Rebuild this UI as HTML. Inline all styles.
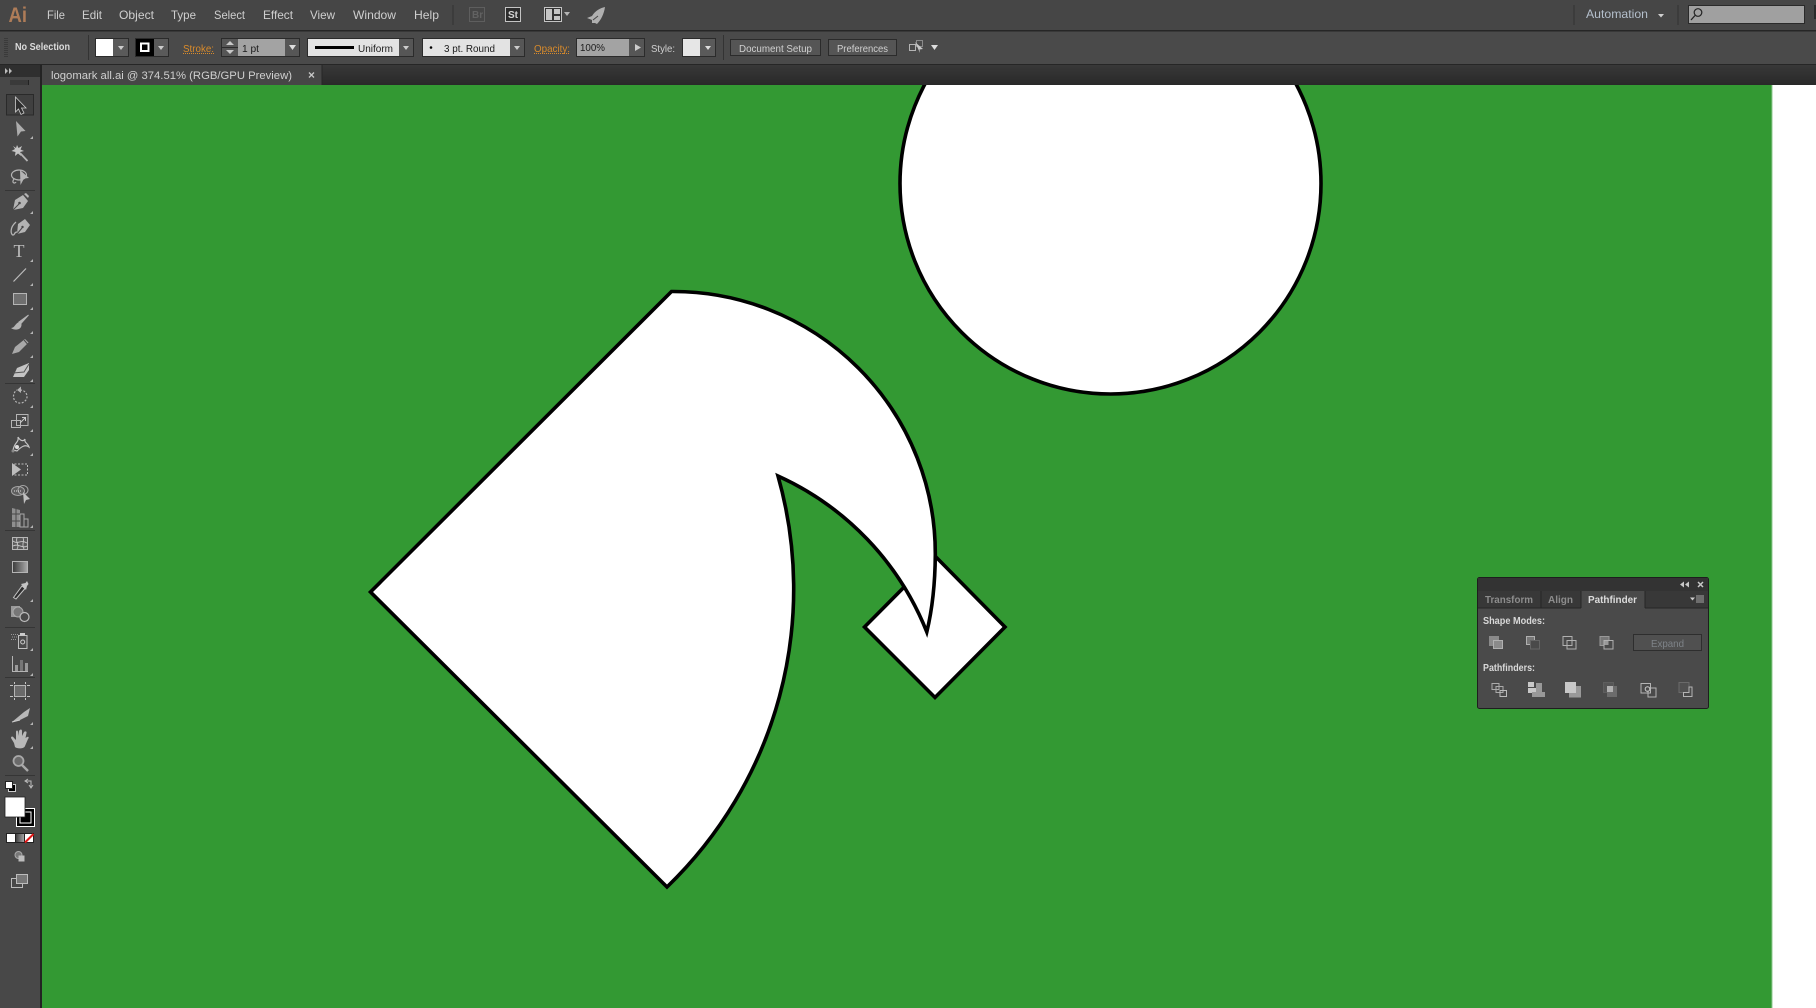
<!DOCTYPE html>
<html><head><meta charset="utf-8"><style>
html,body{margin:0;padding:0;width:1816px;height:1008px;overflow:hidden;background:#fff}
svg{display:block;font-family:"Liberation Sans",sans-serif}
.m{font-size:12px;fill:#cfcfcf}
.c{font-size:10.5px;fill:#d0d0d0}
.o{font-size:10.5px;fill:#d98b2b}
.d{font-size:10.5px;fill:#1c1c1c}
.i{fill:#b4b4b4}
</style></head><body>
<svg width="1816" height="1008" viewBox="0 0 1816 1008" xmlns="http://www.w3.org/2000/svg">
<defs>
<linearGradient id="g"><stop offset="0" stop-color="#3a3a3a"/><stop offset="1" stop-color="#aaa"/></linearGradient>
<linearGradient id="t" x1="0" y1="0" x2="0" y2="1"><stop offset="0" stop-color="#383838"/><stop offset="1" stop-color="#292929"/></linearGradient>
</defs>
<!-- canvas -->
<rect x="42" y="85" width="1729.500" height="923" fill="#339933"/>
<rect x="1771.500" y="85" width="1" height="923" fill="#8fc88f"/>
<g fill="#fff" stroke="#000" stroke-width="3.600" stroke-linejoin="miter" stroke-miterlimit="20">
<circle cx="1110.500" cy="183.500" r="210.500"/>
<path d="M864.500 627 L935 556 L1005 627 L935 697.500 Z"/>
<path d="M671.500 291.500 A262 262 0 0 1 935.300 555 Q935 598 926.800 632 A288 288 0 0 0 778 476 A414 414 0 0 1 667 887 L370.500 592 Z"/>
</g>
<!-- menu bar -->
<rect width="1816" height="31" fill="#464646"/>
<rect y="30" width="1816" height="1.500" fill="#262626"/>
<text x="8.500" y="22" font-size="21" font-weight="bold" fill="#ae7c58" textLength="18.500" lengthAdjust="spacingAndGlyphs">Ai</text>
<text class="m" x="47" y="19" textLength="18" lengthAdjust="spacingAndGlyphs">File</text>
<text class="m" x="82" y="19" textLength="20" lengthAdjust="spacingAndGlyphs">Edit</text>
<text class="m" x="119" y="19" textLength="35" lengthAdjust="spacingAndGlyphs">Object</text>
<text class="m" x="171" y="19" textLength="25" lengthAdjust="spacingAndGlyphs">Type</text>
<text class="m" x="214" y="19" textLength="31" lengthAdjust="spacingAndGlyphs">Select</text>
<text class="m" x="263" y="19" textLength="30" lengthAdjust="spacingAndGlyphs">Effect</text>
<text class="m" x="310" y="19" textLength="25" lengthAdjust="spacingAndGlyphs">View</text>
<text class="m" x="353" y="19" textLength="43" lengthAdjust="spacingAndGlyphs">Window</text>
<text class="m" x="414" y="19" textLength="25" lengthAdjust="spacingAndGlyphs">Help</text>
<rect x="452.500" y="5" width="1" height="20" fill="#333"/>
<rect x="469.500" y="7.500" width="15" height="14" fill="none" stroke="#5e5e5e"/>
<text x="472" y="18" font-size="10" font-weight="bold" fill="#626262">Br</text>
<rect x="505.500" y="7.500" width="15" height="14" fill="#2c2c2c" stroke="#c4c4c4"/>
<text x="508" y="18" font-size="10" font-weight="bold" fill="#d4d4d4">St</text>
<rect x="544.500" y="7.500" width="17" height="14" fill="#333" stroke="#c4c4c4"/>
<rect x="546" y="9" width="6" height="11" fill="#c4c4c4"/><rect x="554" y="9" width="6" height="5" fill="#c4c4c4"/><rect x="554" y="16" width="6" height="4" fill="#c4c4c4"/>
<path d="M564 12 H570 L567 16 Z" class="i"/>
<path d="M605 7 C600 8 595 11 592 16 L587 18 L592 20 L592 23 L595 23 L597 24 C601 20 604 14 605 7 Z" fill="#b0b0b0"/>
<path d="M590 22 L587 25 M593 20 L598 16" stroke="#464646" stroke-width="1"/>
<rect x="1573.500" y="5" width="1" height="20" fill="#333"/>
<text x="1586" y="18" font-size="12" fill="#b4bfcc" textLength="62" lengthAdjust="spacingAndGlyphs">Automation</text>
<path d="M1658 14 H1664 L1661 17.500 Z" fill="#d0d0d0"/>
<rect x="1677.500" y="5" width="1" height="20" fill="#333"/>
<rect x="1688.500" y="5.500" width="116" height="18" fill="#a0a0a0" stroke="#2a2a2a"/>
<circle cx="1698" cy="12.500" r="3.800" fill="none" stroke="#222" stroke-width="1.200"/>
<path d="M1695 15.500 L1691 20" stroke="#222" stroke-width="1.300"/>
<rect x="1814" y="5" width="2" height="14" fill="#2a2a2a"/>
<!-- control bar -->
<rect y="31.500" width="1816" height="33" fill="#4a4a4a"/>
<rect y="64" width="1816" height="1" fill="#262626"/>
<path d="M5 38 V57 M7 38 V57" stroke="#2a2a2a" stroke-width="1" stroke-dasharray="1 1"/>
<text x="15" y="50" font-size="10.500" font-weight="bold" fill="#dcdcdc" textLength="55" lengthAdjust="spacingAndGlyphs">No Selection</text>
<rect x="88" y="35" width="1" height="25" fill="#333"/>
<rect x="95.500" y="38.500" width="33" height="18" fill="#5a5a5a" stroke="#2b2b2b"/>
<rect x="96" y="39" width="17" height="17" fill="#fff"/>
<path d="M118 46 H124 L121 50 Z" fill="#ccc"/>
<rect x="135.500" y="38.500" width="33" height="18" fill="#5a5a5a" stroke="#2b2b2b"/>
<rect x="136" y="39" width="18" height="17" fill="#000"/>
<rect x="141" y="43.500" width="7.500" height="7.500" fill="#000" stroke="#fff" stroke-width="2"/>
<path d="M158 46 H164 L161 50 Z" fill="#ccc"/>
<text class="o" x="183" y="52" textLength="31" lengthAdjust="spacingAndGlyphs">Stroke:</text>
<path d="M183 53.500 H214" stroke="#d98b2b" stroke-dasharray="1 1"/>
<rect x="221.500" y="38.500" width="78" height="18" fill="#565656" stroke="#2b2b2b"/>
<rect x="238" y="39" width="47" height="17" fill="#a3a3a3"/>
<path d="M222 47.500 H238" stroke="#2b2b2b"/>
<path d="M226 45 L230 41 L234 45 Z M226 50 L230 54 L234 50 Z" fill="#c8c8c8"/>
<text class="d" x="242" y="52" textLength="17" lengthAdjust="spacingAndGlyphs">1 pt</text>
<path d="M289 45 H296 L292.500 50 Z" fill="#ddd"/>
<rect x="307.500" y="38.500" width="106" height="18" fill="#565656" stroke="#2b2b2b"/>
<rect x="308" y="39" width="91" height="17" fill="#e3e3e3"/>
<rect x="315" y="46" width="39" height="3" fill="#000"/>
<text class="d" x="358" y="52" textLength="35" lengthAdjust="spacingAndGlyphs">Uniform</text>
<path d="M403 46 H409 L406 50 Z" fill="#ccc"/>
<rect x="422.500" y="38.500" width="102" height="18" fill="#565656" stroke="#2b2b2b"/>
<rect x="423" y="39" width="87" height="17" fill="#e3e3e3"/>
<circle cx="431" cy="47.500" r="1.300" fill="#000"/>
<text class="d" x="444" y="52" textLength="51" lengthAdjust="spacingAndGlyphs">3 pt. Round</text>
<path d="M514 46 H520 L517 50 Z" fill="#ccc"/>
<text class="o" x="534" y="52" textLength="36" lengthAdjust="spacingAndGlyphs">Opacity:</text>
<path d="M534 53.500 H570" stroke="#d98b2b" stroke-dasharray="1 1"/>
<rect x="576.500" y="38.500" width="68" height="18" fill="#565656" stroke="#2b2b2b"/>
<rect x="577" y="39" width="52" height="17" fill="#a3a3a3"/>
<text class="d" x="580" y="51" textLength="25" lengthAdjust="spacingAndGlyphs">100%</text>
<path d="M635 44 L641 47.500 L635 51 Z" fill="#ccc"/>
<text class="c" x="651" y="52" textLength="24" lengthAdjust="spacingAndGlyphs">Style:</text>
<rect x="682.500" y="38.500" width="33" height="18" fill="#5a5a5a" stroke="#2b2b2b"/>
<rect x="683" y="39" width="17" height="17" fill="#e6e6e6"/>
<path d="M705 46 H711 L708 50 Z" fill="#ddd"/>
<rect x="723" y="35" width="1" height="25" fill="#333"/>
<rect x="730.500" y="39.500" width="90" height="16" fill="#555" stroke="#2b2b2b"/>
<text class="c" x="739" y="52" textLength="73" lengthAdjust="spacingAndGlyphs">Document Setup</text>
<rect x="828.500" y="39.500" width="68" height="16" fill="#555" stroke="#2b2b2b"/>
<text class="c" x="837" y="52" textLength="51" lengthAdjust="spacingAndGlyphs">Preferences</text>
<rect x="909.500" y="44.500" width="6" height="6" fill="none" stroke="#b4b4b4"/>
<rect x="916.500" y="40.500" width="6" height="6" fill="none" stroke="#8a8a8a"/>
<path d="M915 42 L923 49 L919.500 49.500 L920 53 Z" fill="#c8c8c8"/>
<path d="M931 45 H938 L934.500 50 Z" fill="#ddd"/>
<!-- tab bar -->
<rect y="65" width="1816" height="20" fill="url(#t)"/>
<rect x="41.500" y="65" width="280" height="20" fill="#464646"/>
<rect x="321.500" y="65" width="1" height="20" fill="#262626"/>
<text x="51" y="79" font-size="11" fill="#cfcfcf" textLength="241" lengthAdjust="spacingAndGlyphs">logomark all.ai @ 374.51% (RGB/GPU Preview)</text>
<path d="M309 72.500 L314 77.500 M314 72.500 L309 77.500" stroke="#c8c8c8" stroke-width="1.300"/>
<!-- tool panel -->
<rect y="65" width="40" height="943" fill="#484848"/>
<rect y="65" width="40" height="12" fill="#2f2f2f"/>
<rect x="40" y="65" width="2" height="943" fill="#232323"/>
<path d="M5 68 L8 71 L5 74 Z M9 68 L12 71 L9 74 Z" fill="#bbb"/>
<path d="M10 80 H29 V85 H10 Z" fill="#222"/><path d="M11 80 V85 M13 80 V85 M15 80 V85 M17 80 V85 M19 80 V85 M21 80 V85 M23 80 V85 M25 80 V85 M27 80 V85" stroke="#666" stroke-width=".7"/>
<rect x="6.500" y="94.500" width="27" height="20.500" fill="#404040" stroke="#2a2a2a"/>
<path d="M5 190.500 H35 M5 383.500 H35 M5 530.500 H35 M5 627.500 H35 M5 677.500 H35 M5 775.500 H35" stroke="#353535"/>
<!-- corner triangles -->
<path class="i" d="M33 136 V139 H30Z M33 211 V214 H30Z M33 259 V262 H30Z M33 283 V286 H30Z M33 307 V310 H30Z M33 331 V334 H30Z M33 355 V358 H30Z M33 379 V382 H30Z M33 405 V408 H30Z M33 429 V432 H30Z M33 453 V456 H30Z M33 525 V528 H30Z M33 599 V602 H30Z M33 648 V651 H30Z M33 673 V676 H30Z M33 722 V725 H30Z M33 746 V749 H30Z"/>
<!-- selection -->
<path d="M15.500 97 L26 108 H21.500 L24 113 L21 114.500 L18.500 109 L15.500 112 Z" fill="#2e2e2e" stroke="#cfcfcf" stroke-width=".8"/>
<path d="M16 121 L25.500 131 L21 131.500 L17.500 136.500 Z" fill="#adadad"/>
<!-- wand -->
<path d="M17 145 L18.500 148 L22 146 L20.500 149.500 L24 151 L20 152 L21 156 L18 153.500 L15 156 L15.500 152 L11.500 151 L15 149 L13 146 L16 148 Z" fill="#c4c4c4"/>
<path d="M20 153 L27.500 161" stroke="#b4b4b4" stroke-width="1.800"/>
<!-- lasso -->
<ellipse cx="19" cy="175" rx="7.500" ry="5" fill="none" stroke="#b4b4b4" stroke-width="1.200"/>
<path d="M14 179 C11 183 15 184 16 182" fill="none" stroke="#b4b4b4" stroke-width="1.200"/>
<path d="M20 170 L29 178 L24 178.500 L20.500 185 Z" fill="#b4b4b4"/>
<!-- pen -->
<path d="M13 210 L15 200 L23 195 L28 201 L23 208 Z" fill="#b4b4b4"/>
<path d="M13 210 L19 204" stroke="#484848" stroke-width="1"/><circle cx="19.500" cy="203" r="1.300" fill="#484848"/>
<path d="M24 194 L28 198 L29 196 L26 193 Z" fill="#b4b4b4"/>
<!-- curvature -->
<path d="M17 234 L18 224 L25 219 L30 225 L25 232 Z" fill="#b4b4b4"/>
<path d="M17 234 L22 228" stroke="#484848"/><circle cx="22.500" cy="227" r="1.200" fill="#484848"/>
<path d="M16 222 C9 228 11 235 13 235 C15 235 14 232 17 232" fill="none" stroke="#b4b4b4" stroke-width="1.300"/>
<!-- type -->
<text x="13.500" y="257" font-family="Liberation Serif,serif" font-size="18" fill="#bcbcbc">T</text>
<!-- line -->
<path d="M13.500 281.500 L26 268.500" stroke="#bcbcbc" stroke-width="1.200"/>
<!-- rect -->
<rect x="13.500" y="293.500" width="13" height="11" fill="#6f6f6f" stroke="#b4b4b4"/>
<!-- brush -->
<path d="M28.500 315 L21 323.500 L19 322 Z" fill="#b4b4b4" stroke="#b4b4b4"/>
<path d="M19.500 322 C15 323 15 328 11 328 C15 331 22 330 21.500 324 Z" fill="#b4b4b4"/>
<!-- pencil -->
<path d="M12 354 L15 347 L25 339 L28.500 342.500 L19 352 Z" fill="#a8a8a8"/><path d="M24 340 L27.500 344" stroke="#484848"/>
<!-- eraser -->
<path d="M13 377 L17 368 L29 363 V370 L24 377 Z" fill="#c4c4c4"/><path d="M13 373 L24 372 L29 364" fill="none" stroke="#555"/>
<!-- rotate -->
<path d="M20 390 C27 390 29 398 25 401 C21 405 14 403 13.500 397 C13.300 394 15 391 17 390" fill="none" stroke="#b4b4b4" stroke-width="1.200" stroke-dasharray="2 1.500"/>
<path d="M17 390 L21 386.500 V393 Z" fill="#b4b4b4"/>
<!-- scale -->
<rect x="11.500" y="420.500" width="9" height="7" fill="none" stroke="#b4b4b4"/>
<rect x="16.500" y="414.500" width="11.500" height="11" fill="none" stroke="#b4b4b4"/>
<path d="M20 423 L25.500 417.500 M22 417.500 H25.500 V421" fill="none" stroke="#ccc"/>
<!-- warp -->
<path d="M13 450 C15 441 19 443 18 437 C21 442 24 441 25 439 C24 443 28 443 29 447 C25 444 21 447 17 451 Z" fill="none" stroke="#c4c4c4" stroke-width="1.200"/>
<circle cx="17" cy="447" r="2" fill="#ddd"/><circle cx="13" cy="451" r="1.500" fill="#888"/>
<!-- free transform -->
<rect x="14.500" y="464" width="13" height="11" fill="none" stroke="#bdbdbd" stroke-dasharray="2 1.500"/>
<path d="M12 463 L21 469.500 L12 476 Z" fill="#bdbdbd"/>
<!-- shape builder -->
<ellipse cx="18" cy="491" rx="6.500" ry="4.500" fill="#5f5f5f" stroke="#a6a6a6"/>
<ellipse cx="23" cy="490" rx="5" ry="4.500" fill="none" stroke="#a6a6a6"/>
<path d="M14 491 H22" stroke="#ddd" stroke-dasharray="1 1"/>
<path d="M23 492 L30 499 L26 500 L24 504 Z" fill="#c0c0c0"/>
<!-- perspective -->
<path d="M12 508 L20 510 V527 H12 Z" fill="#8e8e8e"/>
<path d="M20 514 H24 V527 H20 Z M24 519 H28 V527 H24 Z" fill="none" stroke="#a8a8a8"/>
<path d="M12 514 H20 M12 521 H20 M16 508 V527" stroke="#484848"/>
<!-- mesh -->
<rect x="12.500" y="537.500" width="15" height="12" fill="#5a5a5a" stroke="#b8b8b8"/>
<path d="M13 541 C18 545 20 539 27 543 M13 546 C18 543 23 549 27 546 M17 538 C15 542 20 545 17 549 M23 538 C25 541 21 544 24 549" fill="none" stroke="#c8c8c8" stroke-width=".9"/>
<!-- gradient -->
<rect x="12.500" y="561.500" width="15" height="11" fill="url(#g)" stroke="#b4b4b4"/>
<!-- eyedropper -->
<path d="M13.500 597.500 L22 586 L25 588.500 L16 599 Z" fill="#2e2e2e" stroke="#c4c4c4"/>
<path d="M21 584 L25.500 583 L27 581 L28.500 584 L27 586 L26 590 Z" fill="#c4c4c4"/>
<!-- blend -->
<rect x="11.500" y="606.500" width="8" height="10" fill="#999" stroke="#999"/>
<circle cx="18" cy="612" r="5" fill="#777" stroke="#aaa"/>
<circle cx="24.500" cy="617" r="4.500" fill="#484848" stroke="#bbb" stroke-width="1.200"/>
<!-- symbol sprayer -->
<rect x="18.500" y="635.500" width="8.500" height="13" fill="#4b4b4b" stroke="#c0c0c0"/>
<rect x="20" y="633" width="5" height="2.500" fill="#ccc"/>
<circle cx="22.700" cy="642" r="2" fill="none" stroke="#ccc"/>
<path d="M11 634.500 H18 M12 637 H18 M11 639.500 H17" stroke="#999" stroke-dasharray="1 1"/>
<!-- graph -->
<path d="M12.500 656 V671.500 H28" fill="none" stroke="#b4b4b4"/>
<rect x="15" y="665" width="3" height="6" fill="#999"/><rect x="20" y="660" width="3" height="11" fill="#777"/><rect x="25" y="663" width="3" height="8" fill="#999"/>
<!-- artboard -->
<rect x="14.500" y="685.500" width="11" height="11" fill="#6a6a6a" stroke="#b4b4b4"/>
<path d="M10 685.500 H13 M27 685.500 H30 M10 696.500 H13 M27 696.500 H30 M14.500 682 V684 M25.500 682 V684 M14.500 698 V700 M25.500 698 V700" stroke="#c4c4c4"/>
<!-- slice -->
<path d="M12 722 L24 712 L30 708 L28 716 L20 720 Z" fill="#b8b8b8"/>
<path d="M12 722 L20 720" stroke="#ccc"/>
<!-- hand -->
<path transform="translate(0,4)" d="M14 739 L11 734 C11 732 13 732 14 734 L16 736 V728 C16 726 18 726 18 728 V732 L19 727 C20 725 22 725 22 727 V732 L24 728 C25 727 27 727 26.500 729 L25.500 734 L27 733 C29 732 29 734 28 735 L25 742 C24 745 17 745 15 743 Z" fill="#b8b8b8"/>
<!-- zoom -->
<circle cx="18.500" cy="761" r="5" fill="#6a6a6a" stroke="#a8a8a8" stroke-width="1.800"/>
<path d="M22 765 L28 771" stroke="#a8a8a8" stroke-width="2.400"/>
<!-- default / swap -->
<rect x="8.500" y="784.500" width="7" height="7" fill="#000" stroke="#ccc"/>
<rect x="5.500" y="781.500" width="7" height="7" fill="#fff" stroke="#222"/>
<path d="M25 781 H31 V787 M29 785 L31 788 L33 785 M28 779 L25 781 L28 783" fill="none" stroke="#bbb"/>
<!-- fill stroke -->
<rect x="16.500" y="808.500" width="18" height="18" fill="#000" stroke="#fff"/>
<rect x="20" y="812" width="11" height="11" fill="none" stroke="#fff" stroke-width="1"/>
<rect x="5" y="797" width="20" height="20" fill="#fff" stroke="#222" stroke-width=".8"/>
<!-- color modes -->
<rect x="6.500" y="833.500" width="9" height="9" fill="#fff" stroke="#222"/>
<rect x="15.500" y="833.500" width="9" height="9" fill="url(#g)" stroke="#222"/>
<rect x="24.500" y="833.500" width="9" height="9" fill="#fff" stroke="#222"/>
<path d="M25 842.500 L33.500 834" stroke="#e01818" stroke-width="2"/>
<!-- draw mode -->
<circle cx="18.500" cy="855" r="3.500" fill="#777" stroke="#aaa"/>
<rect x="18.500" y="855.500" width="6" height="6" fill="#bdbdbd"/>
<!-- screen mode -->
<rect x="11.500" y="878.500" width="11" height="9" fill="none" stroke="#bcbcbc"/>
<rect x="16.500" y="874.500" width="11" height="9" fill="#777" stroke="#bcbcbc"/>
<!-- pathfinder panel -->
<rect x="1477.500" y="577.500" width="231" height="131" rx="2" fill="#4a4a4a" stroke="#1e1e1e"/>
<rect x="1478" y="578" width="230" height="14" fill="#333"/>
<rect x="1478" y="591" width="230" height="17" fill="#383838"/>
<rect x="1478" y="607.500" width="230" height="1" fill="#262626"/>
<rect x="1581" y="591" width="64" height="18" fill="#4a4a4a"/>
<path d="M1541 591 V608 M1581 591 V608 M1645 591 V608" stroke="#262626"/>
<path d="M1684 581.500 V587.500 L1680 584.500 Z M1689 581.500 V587.500 L1685 584.500 Z" fill="#c8c8c8"/>
<path d="M1698 582 L1703 587 M1703 582 L1698 587" stroke="#c8c8c8" stroke-width="1.500"/>
<text x="1485" y="603" font-size="10.500" font-weight="bold" fill="#8d8d8d" textLength="48" lengthAdjust="spacingAndGlyphs">Transform</text>
<text x="1548" y="603" font-size="10.500" font-weight="bold" fill="#8d8d8d" textLength="25" lengthAdjust="spacingAndGlyphs">Align</text>
<text x="1588" y="603" font-size="10.500" font-weight="bold" fill="#dcdcdc" textLength="49" lengthAdjust="spacingAndGlyphs">Pathfinder</text>
<path d="M1690 597.500 H1695 L1692.500 600.500 Z" fill="#ccc"/>
<path d="M1696 596 H1704 M1696 598 H1704 M1696 600 H1704 M1696 602 H1704" stroke="#c8c8c8" stroke-width=".8"/>
<text x="1483" y="624" font-size="10.500" font-weight="bold" fill="#d8d8d8" textLength="62" lengthAdjust="spacingAndGlyphs">Shape Modes:</text>
<text x="1483" y="671" font-size="10.500" font-weight="bold" fill="#d8d8d8" textLength="52" lengthAdjust="spacingAndGlyphs">Pathfinders:</text>
<!-- shape modes -->
<rect x="1489.500" y="636.500" width="9" height="9" fill="#8a8a8a" stroke="#8a8a8a"/><rect x="1493.500" y="640.500" width="9" height="8" fill="#8a8a8a" stroke="#b0b0b0"/>
<rect x="1526.500" y="636.500" width="8" height="8" fill="#777" stroke="#b0b0b0"/><rect x="1530.500" y="640.500" width="9" height="8.500" fill="#4a4a4a" stroke="#656565"/>
<rect x="1563" y="636.500" width="9" height="9" fill="none" stroke="#b0b0b0"/><rect x="1567" y="640.500" width="9" height="8.500" fill="none" stroke="#b0b0b0"/>
<rect x="1600" y="636.500" width="9" height="9" fill="#777" stroke="#999"/><rect x="1604" y="640.500" width="9" height="8.500" fill="#4a4a4a" stroke="#b0b0b0"/><rect x="1604.500" y="641" width="4" height="4" fill="#999"/>
<rect x="1633.500" y="634.500" width="68" height="16" fill="#505050" stroke="#2e2e2e"/>
<text x="1651" y="647" font-size="10.500" fill="#7e8388" textLength="33" lengthAdjust="spacingAndGlyphs">Expand</text>
<!-- pathfinders -->
<rect x="1492" y="683.500" width="7" height="6" fill="none" stroke="#aaa"/><rect x="1496" y="686.500" width="7" height="6" fill="none" stroke="#aaa"/><rect x="1500" y="690.500" width="6.500" height="6" fill="none" stroke="#bbb"/>
<rect x="1528" y="682" width="6" height="5" fill="#c8c8c8"/><rect x="1528" y="688" width="9" height="5" fill="#c8c8c8"/><rect x="1536" y="683" width="6" height="9" fill="#999"/><rect x="1532" y="692" width="13" height="5" fill="#999"/>
<rect x="1565" y="682" width="11" height="11" fill="#c8c8c8"/><rect x="1569" y="693" width="12" height="4.500" fill="#999"/><rect x="1576" y="686" width="5" height="8" fill="#999"/>
<rect x="1603.500" y="682.500" width="10" height="10" fill="#555" stroke="#5e5e5e"/><rect x="1607" y="686" width="10" height="11" fill="#6c6c6c"/><rect x="1607" y="686" width="6" height="6" fill="#b0b0b0"/>
<rect x="1641" y="683.500" width="9.500" height="9.500" fill="none" stroke="#b4b4b4"/><rect x="1648" y="688" width="8" height="9" fill="none" stroke="#b4b4b4"/><circle cx="1647.500" cy="689" r="2.300" fill="#4a4a4a" stroke="#ccc"/>
<rect x="1679" y="682.500" width="10" height="10" fill="#505050" stroke="#6a6a6a"/><path d="M1689 687 H1692 V696.500 H1683.500 V692.500 H1689 Z" fill="none" stroke="#b4b4b4"/>
</svg>
</body></html>
